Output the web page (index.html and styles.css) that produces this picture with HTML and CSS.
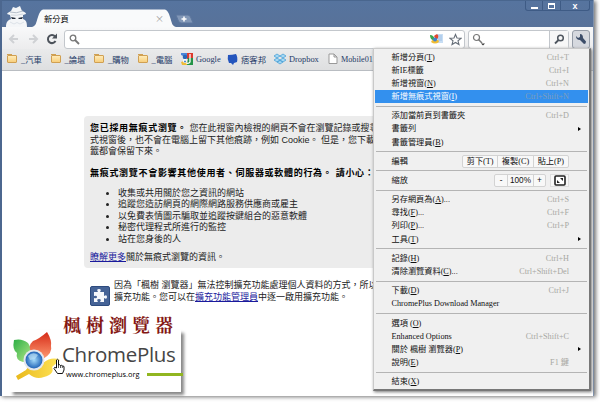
FILE: index.html
```
<!DOCTYPE html>
<html lang="zh-Hant">
<head>
  <meta charset="UTF-8">
  <title>新分頁</title>
  <link rel="stylesheet" href="styles.css">
</head>
<body>
  <div class="window">
    <div class="titlebar">
      <svg class="spy" width="22" height="21" viewBox="0 0 22 21">
        <path d="M0 21C0 16 2 14 5 13L4 9L1 8C2 6 4 6 5 5L7 1L10 2L14 0L16 5C19 6 20 7 20 8L17 9L17 13C20 14 21 16 21 21Z" fill="#f4f6f8"/>
        <path d="M4 6Q10 8 17 5" stroke="#b6bfca" fill="none"/>
        <path d="M5 9Q10 10 17 8" stroke="#d3d9e0" fill="none"/>
        <path d="M5 11L10 12L9 13H6ZM12 12L17 11L16 13H13Z" fill="#222b38"/>
        <path d="M4 16L8 18L11 16.500L14 18L18 16" stroke="#dde2e8" fill="none"/>
      </svg>
      <div class="tab">
        <svg class="tab-shape" width="144" height="18" viewBox="0 0 144 18">
          <path d="M0 18C4 17 4 14 6 8Q8 1 11 .5H133Q136 1 138 8C140 14 140 17 144 18Z" fill="#f9fafb"/>
        </svg>
        <span class="tab-title">新分頁</span>
        <span class="tab-close">×</span>
      </div>
      <svg class="newtab" width="19" height="10" viewBox="0 0 19 10">
        <path d="M1 1H13Q15 1 16 4L18 9H6Q4 9 3 6Z" fill="#8197b7" stroke="#5d779e"/>
        <path d="M9 2.500V7.500M6.500 5H11.500" stroke="#fff" stroke-width="1.500"/>
      </svg>
      <div class="controls">
        <span><i class="min"></i></span><span><i class="max"></i></span><span class="close">x</span>
      </div>
    </div>

    <div class="toolbar">
      <svg class="nav" width="56" height="14" viewBox="0 0 56 14">
        <path d="M11 7H3M7 3L3 7L7 11M22 7H30M26 3L30 7L26 11" fill="none" stroke="#cfd1d4" stroke-width="2"/>
        <path d="M48 4.500A4 4 0 1 0 48.500 9" fill="none" stroke="#4d535b" stroke-width="2"/>
        <path d="M50 1.500V6.500H45Z" fill="#4d535b"/>
      </svg>
      <div class="omnibox">
        <svg width="11" height="11" viewBox="0 0 11 11"><circle cx="4" cy="4" r="2.800" fill="none" stroke="#777" stroke-width="1.300"/><path d="M6 6L10 10" stroke="#777" stroke-width="1.800"/></svg>
        <span class="grow"></span>
        <svg width="15" height="12" viewBox="0 0 15 12">
          <path d="M7 1H14V10H7Z" fill="#c8def4"/><path d="M9 3H13M9 5H13M9 7H13" stroke="#8cb6e0" stroke-width=".7"/>
          <path d="M1 2Q5 2 6 7Q1 8 1 2Z" fill="#38a650"/><path d="M5 3Q8 0 9 2Q10 5 7 7Z" fill="#e5472c"/>
          <path d="M2 9Q3 6 6 7Q10 6 10 9Q6 12 2 9Z" fill="#f2bd32"/><circle cx="6" cy="6.500" r="2" fill="#3d83cc"/>
        </svg>
        <svg class="star" width="13" height="13" viewBox="0 0 13 13"><path d="M6.500 1.500L8 5L12 5.300L9 7.800L10 11.500L6.500 9.500L3 11.500L4 7.800L1 5.300L5 5Z" fill="#fff" stroke="#666e78" stroke-width="1.100"/></svg>
      </div>
      <div class="search">
        <svg width="13" height="13" viewBox="0 0 13 13"><circle cx="4.500" cy="4.500" r="3" fill="none" stroke="#777" stroke-width="1.200"/><path d="M6.500 6.500L10 10" stroke="#777" stroke-width="1.500"/><path d="M9 10.500H13L11 12.500Z" fill="#333"/></svg>
        <span class="go"><svg width="11" height="11" viewBox="0 0 11 11"><circle cx="6.500" cy="4" r="2.800" fill="none" stroke="#4f565f" stroke-width="1.500"/><path d="M4.500 6L1 9.500" stroke="#4f565f" stroke-width="1.800"/></svg></span>
      </div>
      <div class="wrench"><svg width="12" height="12" viewBox="0 0 12 12"><path d="M1 3L3 5L5 4L5 1Q8 1 8 5L11 8.500Q11 11 9 11L5 7Q1 7 1 3Z" fill="#3c4d69"/></svg></div>
    </div>

    <div class="bookmarks">
      <span class="mark folder"><i></i>_汽車</span>
      <span class="mark folder"><i></i>_論壇</span>
      <span class="mark folder"><i></i>_購物</span>
      <span class="mark folder"><i></i>_電腦</span>
      <span class="mark google"><svg width="12" height="12" viewBox="0 0 12 12"><path d="M0 0H6V5L0 2Z" fill="#4b86d8"/><path d="M6 0H12V6H6Z" fill="#dc3a2c"/><path d="M7 5H12V12H6Z" fill="#249447"/><path d="M0 9L6 7V12H1Z" fill="#eebb37"/><circle cx="4" cy="4" r="2.300" fill="#2969b7"/><path d="M9 1V9Q8 11 5 10" stroke="#fff" stroke-width="1.300" fill="none"/><circle cx="4" cy="8" r="2" fill="#fff"/><circle cx="4" cy="8.500" r="1" fill="#3e80ca"/></svg>Google</span>
      <span class="mark pixnet"><svg width="11" height="12" viewBox="0 0 11 12"><path d="M1 2Q5 2 9 1Q11 4 10 9L7 10L6 12L4 10H2Q0 6 1 2Z" fill="#2455bd"/></svg>痞客邦</span>
      <span class="mark dropbox"><svg width="12" height="12" viewBox="0 0 12 12"><path d="M3 1L6 3L3 5L0 3ZM9 1L12 3L9 5L6 3ZM3 5L6 7L3 9L0 7ZM9 5L12 7L9 9L6 7ZM3 9L6 7.500L9 9L6 11Z" fill="#a4d8f5" stroke="#4ba1d5" stroke-width=".8"/></svg>Dropbox</span>
      <span class="mark mobile"><svg width="10" height="12" viewBox="0 0 10 12"><path d="M1 1H6L9 4V10.500H1ZM6 1V4H9" fill="#fff" stroke="#999"/></svg>Mobile01</span>
    </div>

    <div class="page">
      <div class="incognito">
        <p><b>您已採用無痕式瀏覽。</b> 您在此視窗內檢視的網頁不會在瀏覽記錄或搜尋<br>式視窗後，也不會在電腦上留下其他痕跡，例如 Cookie。 但是，您下載<br>籤都會保留下來。</p>
        <p class="warn"><b>無痕式瀏覽不會影響其他使用者、伺服器或軟體的行為。 請小心：</b></p>
        <ul>
          <li>收集或共用關於您之資訊的網站</li>
          <li>追蹤您造訪網頁的網際網路服務供應商或雇主</li>
          <li>以免費表情圖示騙取並追蹤按鍵組合的惡意軟體</li>
          <li>秘密代理程式所進行的監控</li>
          <li>站在您身後的人</li>
        </ul>
        <p class="more"><a href="#">瞭解更多</a>關於無痕式瀏覽的資訊。</p>
      </div>
      <div class="notice">
        <svg width="20" height="20" viewBox="0 0 20 20"><rect x=".5" y=".5" width="19" height="19" rx="1.500" fill="#456396" stroke="#2d4b7e"/><path d="M4 6H8Q6 3 9 3Q12 3 10 6H14V10Q17 8 17 11Q17 14 14 12V16H10Q12 13 9 13Q6 13 8 16H4V12Q7 13 7 11Q7 9 4 10Z" fill="#f6f8fc"/></svg>
        <p>因為「楓樹 瀏覽器」無法控制擴充功能處理個人資料的方式，所以<br>擴充功能。您可以在<a href="#">擴充功能管理員</a>中逐一啟用擴充功能。</p>
      </div>
    </div>
  </div>

  <div class="menu">
    <div class="item">新增分頁(<u>T</u>)<kbd>Ctrl+T</kbd></div>
    <div class="item">新IE標籤<kbd>Ctrl+I</kbd></div>
    <div class="item">新增視窗(<u>N</u>)<kbd>Ctrl+N</kbd></div>
    <div class="item active">新增無痕式視窗(<u>I</u>)<kbd>Ctrl+Shift+N</kbd></div>
    <hr>
    <div class="item">添加當前頁到書籤夾<kbd>Ctrl+D</kbd></div>
    <div class="item sub">書籤列</div>
    <div class="item">書籤管理員(<u>B</u>)</div>
    <hr>
    <div class="item">編輯<span class="buttons edit"><span>剪下(T)</span><span>複製(C)</span><span>貼上(P)</span></span></div>
    <hr>
    <div class="item">縮放<span class="buttons zoom"><span>-</span><span>100%</span><span>+</span></span><span class="full"><svg width="12" height="11" viewBox="0 0 12 11"><rect x="1" y="1" width="10" height="9" rx="1" fill="#fff" stroke="#222" stroke-width="1.600"/><path d="M6 3H9V6ZM3 5V8H6Z" fill="#222"/></svg></span></div>
    <hr>
    <div class="item">另存網頁為(<u>A</u>)...<kbd>Ctrl+S</kbd></div>
    <div class="item">尋找(<u>F</u>)...<kbd>Ctrl+F</kbd></div>
    <div class="item">列印(<u>P</u>)...<kbd>Ctrl+P</kbd></div>
    <div class="item sub">工具(<u>T</u>)</div>
    <hr>
    <div class="item">記錄(<u>H</u>)<kbd>Ctrl+H</kbd></div>
    <div class="item">清除瀏覽資料(<u>C</u>)...<kbd>Ctrl+Shift+Del</kbd></div>
    <hr>
    <div class="item">下載(<u>D</u>)<kbd>Ctrl+J</kbd></div>
    <div class="item">ChromePlus Download Manager</div>
    <hr>
    <div class="item">選項 (<u>O</u>)</div>
    <div class="item">Enhanced Options<kbd>Ctrl+Shift+C</kbd></div>
    <div class="item sub">關於 楓樹 瀏覽器(<u>P</u>)</div>
    <div class="item">說明(<u>E</u>)<kbd>F1 鍵</kbd></div>
    <hr>
    <div class="item">結束(<u>X</u>)</div>
  </div>

  <div class="badge">
    <div class="badge-title">楓樹瀏覽器</div>
    <div class="badge-body">
      <svg width="52" height="52" viewBox="0 0 52 52">
        <defs>
          <linearGradient id="green" x2="1" y2="1"><stop stop-color="#2daf45"/><stop offset="1" stop-color="#b5e88a"/></linearGradient>
          <linearGradient id="red" x2="0" y2="1"><stop stop-color="#d52b18"/><stop offset="1" stop-color="#ff9a71"/></linearGradient>
          <linearGradient id="gold" x2="1"><stop stop-color="#e9b91d"/><stop offset="1" stop-color="#ffe457"/></linearGradient>
          <radialGradient id="blue"><stop stop-color="#a4dafa"/><stop offset="1" stop-color="#2165b9"/></radialGradient>
        </defs>
        <path d="M4 9Q12 7 18 12Q22 17 21 29L13 31Q5 29 7 22Q2 19 4 9Z" fill="url(#green)"/>
        <path d="M37 1Q42 9 41 15Q43 22 33 28L22 23Q17 15 23 10Q29 8 37 1Z" fill="url(#red)"/>
        <path d="M6 45L16 39Q24 26 33 32Q42 25 50 29L42 36Q45 43 34 46Q26 49 19 43L8 49Z" fill="url(#gold)"/>
        <circle cx="24" cy="29" r="10.500" fill="#e3e7ed"/><circle cx="24" cy="29" r="8.500" fill="url(#blue)"/>
        <path d="M18 25Q23 20 28 24L25 28L20 29Z" fill="#c7eafa" opacity=".6"/>
      </svg>
      <div class="brand">
        <div class="brand-name">ChromePlus</div>
        <div class="brand-url">www.chromeplus.org<i></i></div>
      </div>
    </div>
    <svg class="hand" width="12" height="17" viewBox="0 0 12 17"><path d="M3.500 10V2Q4.500 .5 5.500 2V7Q6.500 6 7.500 7.500Q8.500 6.500 9.300 8Q11 7.500 11 9V12L9.500 15.500H4.500L1 10.500Q1 8.500 3.500 10Z" fill="#fff" stroke="#111"/><path d="M5.500 7V10M7.500 7.500V10M9.300 8V10" stroke="#111" stroke-width=".7"/></svg>
  </div>
</body>
</html>
```
FILE: styles.css
```
* {
  box-sizing: border-box;
}
body {
  margin: 0;
  width: 600px;
  height: 402px;
  overflow: hidden;
  position: relative;
  background: #fff;
  font-family: "Liberation Serif", "Noto Sans CJK TC", serif;
  font-size: 9px;
  white-space: nowrap;
}
p, ul {
  margin: 0;
}
.window {
  width: 594px;
  height: 396px;
  display: flex;
  flex-direction: column;
  border-left: 2px solid #4c678f;
  border-right: 1px solid #7f91ab;
  box-shadow: 2px 1px 4px #777;
}
.titlebar {
  height: 27px;
  display: flex;
  align-items: flex-end;
  background: linear-gradient(#56749f, #587299);
  border-top: 1px solid #49668e;
}
.spy {
  margin-left: 4px;
  flex: none;
}
.tab {
  position: relative;
  width: 144px;
  height: 18px;
  margin-left: 4px;
  display: flex;
  align-items: center;
  padding: 0 12px 0 12px;
  font-family: "Noto Sans CJK TC", sans-serif;
  font-size: 8.3px;
}
.tab-shape {
  position: absolute;
  left: 0;
  top: 0;
}
.tab-title, .tab-close {
  position: relative;
}
.tab-close {
  margin-left: auto;
  color: #999;
  font-size: 9px;
}
.newtab {
  margin: 0 0 3px -1px;
}
.controls {
  display: flex;
  align-self: flex-start;
  margin: 0 3px 0 auto;
  width: 65px;
  height: 10px;
  border: 1px solid #3e5b85;
  border-top: 0;
  border-radius: 0 0 3px 3px;
}
.controls span {
  display: flex;
  align-items: center;
  justify-content: center;
  width: 18px;
  border-right: 1px solid #3e5b85;
}
.controls .close {
  width: 29px;
  border: 0;
  color: #fff;
  font: bold 9px/8px "Liberation Sans", sans-serif;
}
.min {
  width: 7px;
  height: 2px;
  background: #fff;
  margin-top: 4px;
}
.max {
  width: 7px;
  height: 6px;
  border: 1px solid #fff;
  border-top-width: 2px;
}
.toolbar {
  height: 22px;
  display: flex;
  align-items: center;
  padding: 2px 3px 0 5px;
  background: linear-gradient(#f8f9fa, #ececed);
}
.nav {
  flex: none;
}
.omnibox, .search, .wrench {
  height: 19px;
  display: flex;
  align-items: center;
  background: #fff;
  border: 1px solid #c3c7cc;
  border-radius: 3px;
}
.omnibox {
  width: 402px;
  margin-left: 1px;
  padding: 0 2px 0 4px;
}
.grow {
  flex: 1;
}
.star {
  margin-left: 5px;
}
.search {
  width: 101px;
  margin-left: 3px;
  padding-left: 3px;
}
.go {
  width: 19px;
  height: 17px;
  margin-left: auto;
  display: flex;
  align-items: center;
  justify-content: center;
  border-left: 1px solid #c3c7cc;
  background: #f7f7f7;
}
.wrench {
  width: 18px;
  margin-left: 3px;
  justify-content: center;
  border-color: #969da8;
  background: #d6d9df;
}
.bookmarks {
  height: 22px;
  display: flex;
  align-items: center;
  padding: 0 0 1px 5px;
  background: linear-gradient(#e9eaeb, #dedfe0);
  border-bottom: 1px solid #b9bdc2;
  color: #263b68;
}
.mark {
  display: flex;
  align-items: center;
  gap: 3px;
  font-size: 8.4px;
  flex: none;
}
.folder {
  width: 43.5px;
  gap: 4px;
}
.folder i {
  position: relative;
  width: 10px;
  height: 8px;
  background: linear-gradient(#ffebb8, #f8cf7d);
  border: 1px solid #d0a052;
  border-radius: 1px;
}
.folder i::before {
  content: "";
  position: absolute;
  left: -1px;
  top: -2px;
  width: 5px;
  height: 1px;
  background: #d0a052;
}
.google {
  width: 46px;
}
.pixnet {
  width: 47px;
}
.dropbox {
  width: 54px;
}
.mobile {
  gap: 3px;
  font-size: 8.2px;
}
.page {
  flex: 1;
  padding: 45px 0 0 82px;
  background: #fff;
  font-family: "Liberation Sans", "Noto Sans CJK TC", sans-serif;
  font-size: 9px;
  line-height: 11.5px;
  color: #222;
}
.incognito {
  width: 360px;
  height: 152px;
  padding: 7px 6px 0;
  background: #ececec;
  border-radius: 4px;
}
.incognito b {
  letter-spacing: .7px;
  color: #000;
}
.warn {
  margin-top: 10.5px;
}
.incognito ul {
  margin-top: 8px;
  padding-left: 28px;
}
.more {
  margin-top: 7px;
}
a {
  color: #1a1a9c;
}
.notice {
  display: flex;
  gap: 4px;
  margin-top: 12px;
  padding-left: 6px;
}
.notice svg {
  margin-top: 6px;
}
.menu {
  position: absolute;
  left: 373px;
  top: 48px;
  width: 218px;
  height: 343px;
  padding: 1.5px 1px;
  background: #f0f0f0;
  border: 1px solid #c9c9c9;
  border-right: 2px solid #777;
  border-bottom: 2px solid #777;
  box-shadow: 1px 1px 3px #777;
  font-size: 8.2px;
  color: #111;
}
.item {
  position: relative;
  height: 13.15px;
  line-height: 13px;
  display: flex;
  align-items: center;
  padding: 0 19px 0 16.5px;
  white-space: pre;
}
.item kbd {
  margin-left: auto;
  font: inherit;
  color: #a7a7a2;
}
.item.active {
  background: #3390ee;
  color: #fff;
}
.item.active kbd {
  color: #7f9dbb;
}
.sub::after {
  content: "";
  margin-left: auto;
  margin-right: -12px;
  border: 2.5px solid transparent;
  border-left: 3px solid #000;
  border-right: 0;
}
.menu hr {
  height: 1px;
  margin: 2.55px 1px;
  border: 0;
  background: #b4b4b4;
}
.buttons {
  display: flex;
  margin-left: auto;
  height: 13px;
  border: 1px solid #d3d3d3;
  border-radius: 2px;
  background: #f8f8f8;
  line-height: 11px;
}
.buttons span {
  text-align: center;
}
.buttons span + span {
  border-left: 1px solid #d3d3d3;
}
.edit {
  width: 107px;
}
.edit span {
  flex: 1;
}
.zoom {
  width: 52px;
  margin-right: 4px;
  font-family: "Liberation Sans", sans-serif;
}
.zoom span {
  width: 12px;
}
.zoom span:nth-child(2) {
  width: 26px;
}
.full {
  display: flex;
  align-items: center;
  justify-content: center;
  width: 19px;
  height: 13px;
  border: 1px solid #dedede;
  background: #f8f8f8;
}
.badge {
  position: absolute;
  left: 10px;
  top: 311px;
  width: 174px;
  height: 82px;
}
.badge::before {
  content: "";
  position: absolute;
  left: 0;
  top: 19px;
  width: 171px;
  height: 62px;
  background: #fff;
  box-shadow: 3px 3px 3px #888;
}
.badge-title {
  position: relative;
  padding-left: 53px;
  height: 20px;
  color: #841713;
  font: bold 18px/26px "Noto Serif CJK TC", "Noto Sans CJK TC", serif;
  letter-spacing: 5px;
}
.badge-body {
  position: relative;
  display: flex;
}
.brand {
  padding-top: 11px;
}
.brand-name {
  color: #454545;
  font: 20.5px/24px "Open Sans", sans-serif;
  letter-spacing: -.3px;
}
.brand-url {
  display: flex;
  align-items: center;
  gap: 7px;
  padding-left: 4px;
  font: 7.4px/16px "Open Sans", sans-serif;
}
.brand-url i {
  width: 36px;
  height: 3px;
  background: #91b620;
}
.hand {
  position: absolute;
  left: 43px;
  top: 47px;
}
```
